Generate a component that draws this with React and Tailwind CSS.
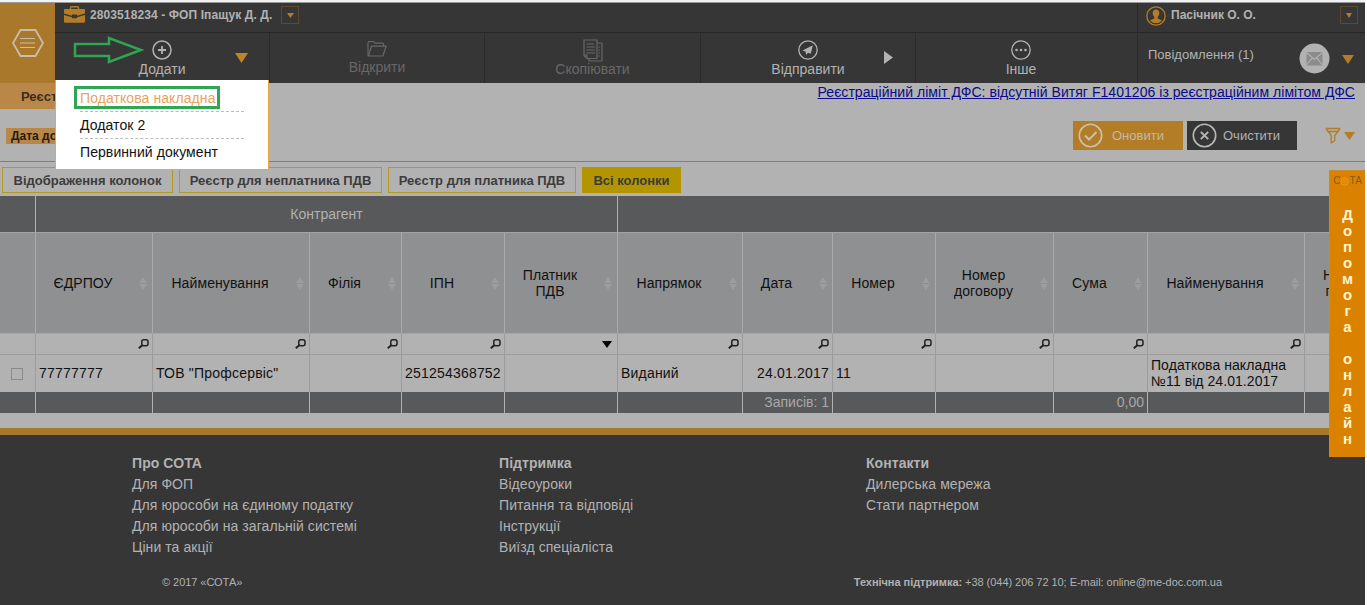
import React from "react";

const columns = [
  { title: ["ЄДРПОУ"], width: "w-[117px]", filter: "search", value: "77777777" },
  { title: ["Найменування"], width: "w-[157px]", filter: "search", value: 'ТОВ "Профсервіс"' },
  { title: ["Філія"], width: "w-[92px]", filter: "search" },
  { title: ["ІПН"], width: "w-[103px]", filter: "search", value: "251254368752" },
  { title: ["Платник", "ПДВ"], width: "w-[113px]", filter: "select" },
  { title: ["Напрямок"], width: "w-[125px]", filter: "search", value: "Виданий" },
  { title: ["Дата"], width: "w-[90px]", filter: "search", value: "24.01.2017", right: true, total: "Записів: 1" },
  { title: ["Номер"], width: "w-[103px]", filter: "search", value: "11" },
  { title: ["Номер", "договору"], width: "w-[118px]", filter: "search" },
  { title: ["Сума"], width: "w-[94px]", filter: "search", total: "0,00" },
  { title: ["Найменування"], width: "w-[157px]", filter: "search", value: "Податкова накладна №11 від 24.01.2017", wrap: true },
];

const footerLinks = [
  {
    title: "Про СОТА",
    links: ["Для ФОП", "Для юрособи на єдиному податку", "Для юрособи на загальній системі", "Ціни та акції"],
  },
  { title: "Підтримка", links: ["Відеоуроки", "Питання та відповіді", "Інструкції", "Виїзд спеціаліста"] },
  { title: "Контакти", links: ["Дилерська мережа", "Стати партнером"] },
];

const Triangle = ({ className }) => (
  <svg viewBox="0 0 12 10" preserveAspectRatio="none" className={className}>
    <path d="M0 0h12L6 10z" fill="currentColor" />
  </svg>
);

const SearchIcon = () => (
  <svg width="11" height="10" viewBox="0 0 11 10" fill="none" stroke="#222">
    <rect x="3.8" y="0.800" width="6.200" height="6" rx="2" strokeWidth="1.500" />
    <path d="M4.600 6L0.800 9.200" strokeWidth="2" />
  </svg>
);

const SortIcon = () => (
  <svg width="8" height="13" viewBox="0 0 8 13" fill="#9b9d9e">
    <path d="M4 0l4 6H0zM4 13l4-6H0z" />
  </svg>
);

const BriefcaseIcon = () => (
  <svg width="21" height="17" viewBox="0 0 21 17">
    <path d="M6.500 3.500V1.500q0-.8.8-.8h6.400q.8 0 .8.800v2" fill="none" stroke="#b37c27" strokeWidth="1.400" />
    <path d="M1 3h19q1 0 1 1v3.500L13 9.800V8.600H8v1.200L0 7.500V4q0-1 1-1zM0 9l8 2.200v1h5v-1L21 9v6.800q0 1-1 1H1q-1 0-1-1z" fill="#b37c27" />
  </svg>
);

const HexMenuIcon = () => (
  <svg width="32" height="28" viewBox="0 0 32 28" fill="none" stroke="#c9bda9">
    <path d="M8.500 1h15L31 14l-7.500 13h-15L1 14z" strokeWidth="1.800" />
    <path d="M8 9.500h15M8 14h15M8 18.500h15" strokeWidth="1.200" />
  </svg>
);

const PlusIcon = () => (
  <svg width="20" height="20" viewBox="0 0 20 20" fill="none" stroke="#b2b2b2">
    <circle cx="10" cy="10" r="9" strokeWidth="1.500" />
    <path d="M10 6v8M6 10h8" strokeWidth="1.800" />
  </svg>
);

const FolderIcon = () => (
  <svg width="20" height="17" viewBox="0 0 20 17" fill="none" stroke="#686868" strokeWidth="1.200">
    <path d="M1 15.500V3q0-1.500 1.500-1.500h4L8 3.200h7.500q1 0 1 1V6" />
    <path d="M1.300 16L4.500 6.200H19L16 16z" strokeLinejoin="round" />
  </svg>
);

const CopyIcon = () => (
  <svg width="20" height="23" viewBox="0 0 20 23" fill="none" stroke="#686868" strokeWidth="1.200">
    <path d="M1 1h13v18.500H4L1 16.500z" />
    <path d="M14 4h5v18H6v-2.500M1 16h3v3.500M3.500 5H11M3.500 8H12M3.500 11H12M3.500 14H12M15.500 8H17M15.500 11H17M15.500 14H17M15.500 17H17" />
  </svg>
);

const SendIcon = () => (
  <svg width="20" height="20" viewBox="0 0 20 20">
    <circle cx="10" cy="10" r="9.200" fill="none" stroke="#b2b2b2" strokeWidth="1.300" />
    <path d="M14.800 5.200L4.500 10.500l3.200 1.200L8 15l2-2.300 2.800 1z" fill="#b2b2b2" />
  </svg>
);

const MoreIcon = () => (
  <svg width="20" height="20" viewBox="0 0 20 20">
    <circle cx="10" cy="10" r="9.200" fill="none" stroke="#b2b2b2" strokeWidth="1.300" />
    <g fill="#b2b2b2">
      <circle cx="5.500" cy="10" r="1.300" />
      <circle cx="10" cy="10" r="1.300" />
      <circle cx="14.500" cy="10" r="1.300" />
    </g>
  </svg>
);

const UserIcon = () => (
  <svg width="20" height="20" viewBox="0 0 20 20">
    <circle cx="10" cy="10" r="9.200" fill="none" stroke="#b37c27" strokeWidth="1.300" />
    <path d="M10 3.500c2.200 0 3.300 1.500 3.300 3.600 0 1.800-.8 3.200-1.600 3.900v1.400l4.300 2a8 8 0 0 1-12 0l4.300-2V11c-.8-.7-1.600-2.100-1.600-3.900C6.700 5 7.800 3.500 10 3.500z" fill="#b37c27" />
  </svg>
);

const MailIcon = () => (
  <svg width="31" height="31" viewBox="0 0 31 31">
    <circle cx="15.500" cy="15.500" r="15" fill="#b2b2b2" />
    <rect x="7.500" y="9" width="16" height="13.500" fill="#8b8b8b" />
    <path d="M7.500 9.500l8 7 8-7M7.500 22l5.700-7.200M23.500 22l-5.700-7.200" fill="none" stroke="#b2b2b2" strokeWidth="1.200" />
  </svg>
);

const Header = () => (
  <header className="flex h-[80px] bg-[#363636] text-[#b2b2b2]">
    <div className="flex w-[55px] items-center justify-center bg-[#aa782b]">
      <HexMenuIcon />
    </div>
    <div className="flex flex-col w-[1082px]">
      <div className="flex h-[29px] items-start pl-[9px] pt-[3px]">
        <BriefcaseIcon />
        <span className="ml-[5px] w-[183px] mt-px whitespace-nowrap text-[12px] leading-4 font-bold tracking-[0.1px]">2803518234 - ФОП Іпащук Д. Д.</span>
        <span className="ml-[8px] flex h-[18px] w-[18px] items-center justify-center border border-[#5c4a2c]">
          <Triangle className="h-[5px] w-[7px] text-[#b37c27]" />
        </span>
      </div>
      <nav className="flex grow border-t border-[#262626]">
        <div className="relative flex w-[215px] flex-col items-center border-r border-[#2a2a2a] pt-[7px]">
          <PlusIcon />
          <span className="text-[14px] leading-[18px]">Додати</span>
          <Triangle className="absolute right-[21px] top-[20px] h-[10px] w-[13px] text-[#c08428]" />
          <svg className="absolute left-[18px] top-[3px]" width="72" height="28" viewBox="0 0 72 28">
            <path d="M2 8h34V2l32 12L36 26v-6H2z" fill="none" stroke="#2fa555" strokeWidth="2.500" />
          </svg>
        </div>
        <div className="flex w-[215px] flex-col items-center border-r border-[#2a2a2a] pt-[7px] text-[#686868]">
          <FolderIcon />
          <span className="mt-px text-[14px] leading-[18px]">Відкрити</span>
        </div>
        <div className="flex w-[216px] flex-col items-center border-r border-[#2a2a2a] pt-[6px] text-[#686868]">
          <CopyIcon />
          <span className="-mt-[2px] text-[14px] leading-[18px]">Скопіювати</span>
        </div>
        <div className="relative flex w-[215px] flex-col items-center border-r border-[#2a2a2a] pt-[7px]">
          <SendIcon />
          <span className="text-[14px] leading-[18px]">Відправити</span>
          <Triangle className="absolute right-[20px] top-[20px] h-[9px] w-[13px] -rotate-90" />
        </div>
        <div className="flex w-[210px] flex-col items-center pt-[7px]">
          <MoreIcon />
          <span className="text-[14px] leading-[18px]">Інше</span>
        </div>
      </nav>
    </div>
    <div className="flex w-[228px] flex-col border-l border-[#2a2a2a]">
      <div className="flex h-[29px] items-start pl-[8px] pr-[7px] pt-[3px]">
        <UserIcon />
        <span className="ml-[5px] text-[12px] leading-4 mt-px font-bold">Пасічник О. О.</span>
        <span className="ml-auto flex h-[18px] w-[18px] items-center justify-center border border-[#5c4a2c]">
          <Triangle className="h-[5px] w-[6px] text-[#b37c27]" />
        </span>
      </div>
      <div className="flex grow border-t border-[#262626] pl-[10px] pt-[10px]">
        <span className="mt-[3px] w-[151px] text-[13px] leading-[18px]">Повідомлення (1)</span>
        <MailIcon />
        <Triangle className="ml-[12px] mt-[12px] h-[9px] w-[12px] text-[#b37c27]" />
      </div>
    </div>
  </header>
);

const AddMenu = () => (
  <div className="absolute left-[55px] top-[80px] h-[90px] w-[214px] border border-t-0 border-[#e8a64a] bg-white px-[24px] text-[14px] tracking-[0.08px] text-[#111]">
    <div className="mt-[5px] h-[27px] border-b border-dashed border-[#bbb] pt-[3px] leading-[20px]">
      <span className="relative text-[#eaa25b]">
        Податкова накладна
        <span className="absolute -left-[6px] -top-[4px] h-[23px] w-[146px] border-[3px] border-[#2fa555]" />
      </span>
    </div>
    <div className="h-[27px] border-b border-dashed border-[#bbb] pt-[3px] leading-[20px]">Додаток 2</div>
    <div className="pt-[3px] leading-[20px]">Первинний документ</div>
  </div>
);

const Toolbar = () => (
  <>
    <div className="flex h-[26px] justify-between">
      <span className="w-[90px] whitespace-nowrap bg-[#b98748] pl-[21px] text-[13px] font-bold leading-[27px] text-[#3d2c20]">Реєстр</span>
      <a href="#" className="mr-[10px] text-[14px] leading-[18px] tracking-[0.04px] text-[#0a0a8c] underline">
        Реєстраційний ліміт ДФС: відсутній Витяг F1401206 із реєстраційним лімітом ДФС
      </a>
    </div>
    <div className="flex h-[53px] items-start border-b border-[#7e7e7e] pt-[12px]">
      <span className="ml-[6px] mt-[7px] h-[16px] w-[67px] whitespace-nowrap bg-[#b98748] pl-[5px] text-[12px] font-bold leading-[16px] text-[#241a12]">Дата док.</span>
      <div className="ml-[1000px] flex h-[29px] w-[110px] items-center bg-[#b37c27] pl-[5px] text-[#c4b8a4]">
        <svg width="25" height="25" viewBox="0 0 25 25" fill="none" stroke="#c9c1b2">
          <circle cx="12.500" cy="12.500" r="11.200" strokeWidth="1.600" />
          <path d="M7 12.500l4 4L18.500 9" strokeWidth="2" />
        </svg>
        <span className="ml-[9px] text-[13px]">Оновити</span>
      </div>
      <div className="ml-[4px] flex h-[29px] w-[110px] items-center bg-[#363636] pl-[5px] text-[#b2b2b2]">
        <svg width="25" height="25" viewBox="0 0 25 25" fill="none" stroke="#b8b8b8">
          <circle cx="12.500" cy="12.500" r="11.200" strokeWidth="1.600" />
          <path d="M8.800 8.800l7.400 7.400M16.200 8.800l-7.400 7.400" strokeWidth="1.900" />
        </svg>
        <span className="ml-[6px] text-[13px]">Очистити</span>
      </div>
      <svg className="ml-[28px] mt-[6px]" width="16" height="17" viewBox="0 0 16 17" fill="none" stroke="#b37c27" strokeWidth="1.300" strokeLinejoin="round">
        <path d="M0.800 1.500h14.400M0.800 1.500L6.200 8.500v7.500l3.600-2.500V8.500l5.400-7M3.500 4.500h9" />
      </svg>
      <Triangle className="ml-[3px] mt-[11px] h-[8px] w-[11px] text-[#b37c27]" />
    </div>
  </>
);

const ColumnButtons = () => (
  <div className="flex h-[34px] items-start gap-[6px] pl-[2px] pt-[5px] text-[13px] font-bold leading-[24px] text-[#3c3c3c]">
    <button className="h-[26px] w-[171px] border border-[#b09a22] pt-px">Відображення колонок</button>
    <button className="h-[26px] w-[203px] border border-[#b09a22] pt-px">Реєстр для неплатника ПДВ</button>
    <button className="h-[26px] w-[188px] border border-[#b09a22] pt-px">Реєстр для платника ПДВ</button>
    <button className="h-[26px] w-[99px] bg-[#b39500] pt-px">Всі колонки</button>
  </div>
);

const RegisterTable = () => (
  <div className="overflow-hidden text-[14px] leading-[16px] text-[#111]">
    <div className="flex h-[37px] border-b border-[#a3a5a5] bg-[#58595a] leading-[36px] text-[#b2b2b2]">
      <div className="w-[36px] border-r border-[#b2b2b2]" />
      <div className="w-[582px] border-r border-[#b2b2b2] text-center">Контрагент</div>
    </div>
    <div className="flex h-[101px] border-b border-[#a6a8a8] bg-[#8e9091]">
      <div className="w-[36px] border-r border-[#a9abab]" />
      {columns.map((col, i) => (
        <div key={i} className={`${col.width} flex items-center border-r border-[#a9abab] pr-[5px]`}>
          <div className="grow pr-[9px] text-center tracking-[0.1px]">
            {col.title.map((line) => (
              <div key={line}>{line}</div>
            ))}
          </div>
          <SortIcon />
        </div>
      ))}
      <div className="flex w-[28px] flex-col items-end justify-center">
        <div>Н</div>
        <div>п</div>
      </div>
    </div>
    <div className="flex h-[21px] border-b border-[#9c9c9c]">
      <div className="w-[36px] border-r border-[#9c9c9c]" />
      {columns.map((col, i) => (
        <div key={i} className={`${col.width} flex items-center justify-end border-r border-[#9c9c9c] pr-[3px]`}>
          {col.filter === "search" ? <SearchIcon /> : <Triangle className="mr-[2px] h-[7px] w-[10px] text-black" />}
        </div>
      ))}
    </div>
    <div className="flex h-[37px]">
      <div className="flex w-[36px] items-center border-r border-[#9c9c9c] pl-[11px]">
        <span className="h-[12px] w-[12px] border border-[#8a8a8a]" />
      </div>
      {columns.map((col, i) => (
        <div
          key={i}
          className={`${col.width} flex items-center border-r border-[#9c9c9c] px-[3px] pb-[2px] ${col.right ? "justify-end" : ""} ${col.wrap ? "tracking-[0.06px]" : "tracking-[0.2px]"}`}
        >
          {col.value}
        </div>
      ))}
    </div>
    <div className="flex h-[21px] bg-[#58595a] leading-[21px] text-[#a8a8a8]">
      <div className="w-[36px] border-r border-[#b2b2b2]" />
      {columns.map((col, i) => (
        <div key={i} className={`${col.width} border-r border-[#b2b2b2] pr-[3px] text-right`}>
          {col.total}
        </div>
      ))}
    </div>
  </div>
);

const Footer = () => (
  <footer className="h-[177px] border-t-[7px] border-[#aa782b] bg-[#363636] pt-[18px] text-[#b2b2b2]">
    <div className="flex h-[118px] pl-[132px] text-[14px] leading-[21px] tracking-[0.07px]">
      {footerLinks.map((group) => (
        <div key={group.title} className="w-[367px]">
          <h4 className="font-bold">{group.title}</h4>
          {group.links.map((link) => (
            <div key={link}>{link}</div>
          ))}
        </div>
      ))}
    </div>
    <div className="flex justify-between pl-[162px] pr-[143px] text-[11px] leading-[22px] tracking-[-0.045px]">
      <span>© 2017 «СОТА»</span>
      <span>
        <b>Технічна підтримка:</b> +38 (044) 206 72 10; E-mail: online@me-doc.com.ua
      </span>
    </div>
  </footer>
);

const HelpTab = () => (
  <div className="absolute right-0 top-[170px] h-[287px] w-[36px] border-l border-t border-[#c98a2a] bg-[#da8200] text-center">
    <div className="flex items-center justify-center pt-[4px] text-[10px] leading-[12px] text-[#8a5a18]">
      <span>С</span>
      <svg width="9" height="9" viewBox="0 0 9 9" fill="none" stroke="#f09a22">
        <circle cx="4.500" cy="4.500" r="3.700" />
        <circle cx="4.500" cy="4.500" r="1.500" />
      </svg>
      <span>ТА</span>
    </div>
    <div className="mt-[20px] text-[15px] font-bold leading-[16px] text-[#fff3d0]">
      {"Допомога онлайн".split("").map((letter, i) => (
        <div key={i} className="h-[16px]">{letter}</div>
      ))}
    </div>
  </div>
);

const App = () => {
  return (
    <div className="h-[605px] w-[1367px] overflow-hidden bg-white font-['Liberation_Sans',Arial,sans-serif]">
      <div className="relative h-[605px] w-[1365px] bg-[#b2b2b2]">
        <div className="h-[3px] border-b border-[#999] bg-[#f2f2f2]" />
        <Header />
        <Toolbar />
        <ColumnButtons />
        <RegisterTable />
        <div className="h-[15px]" />
        <Footer />
        <AddMenu />
        <HelpTab />
      </div>
    </div>
  );
};

export default App;
